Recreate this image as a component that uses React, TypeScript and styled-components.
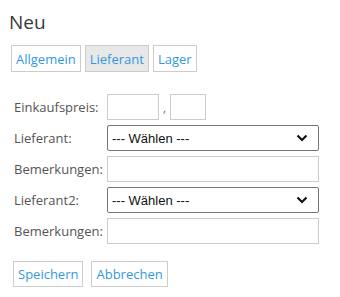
import styled, { createGlobalStyle } from "styled-components";

const GlobalStyle = createGlobalStyle`
  body {
    margin: 0;
    background: #fff;
    font-family: "Open Sans", "DejaVu Sans", sans-serif;
  }
`;

const Page = styled.div`
  padding: 10px 0 0 9px;
`;

const Title = styled.h1`
  margin: 0;
  font-size: 19px;
  line-height: 24px;
  font-weight: 400;
  color: #3a3a3a;
`;

const Tabs = styled.div`
  display: flex;
  gap: 4px;
  margin: 11px 0 0 2px;
`;

const Tab = styled.button<{ $active?: boolean; $height?: string }>`
  height: ${(props) => props.$height || "27px"};
  padding: 0 4px;
  border: 1px solid #cccccc;
  background: ${(props) => (props.$active ? "#e8e8e8" : "#fff")};
  color: #3399dd;
  font-family: "Open Sans", sans-serif;
  font-size: 13px;
  cursor: pointer;
`;

const Form = styled.div`
  display: grid;
  grid-template-columns: 93px 212px;
  grid-auto-rows: 26px;
  row-gap: 5px;
  margin: 22px 0 0 5px;
  align-items: center;
`;

const Label = styled.label`
  font-size: 13px;
  color: #555;
`;

const PriceRow = styled.div`
  display: flex;
  align-items: center;
`;

const Input = styled.input<{ $width?: string }>`
  box-sizing: border-box;
  height: 26px;
  width: ${(props) => props.$width || "100%"};
  border: 1px solid #cccccc;
  padding: 0 4px;
  font-size: 13px;
  outline: none;
`;

const Comma = styled.span`
  width: 11px;
  text-align: center;
  font-size: 13px;
  color: #3399dd;
`;

const Select = styled.div`
  box-sizing: border-box;
  height: 26px;
  width: 100%;
  border: 1px solid #767676;
  border-radius: 2px;
  display: flex;
  align-items: center;
  justify-content: space-between;
  padding: 0 10px 0 4px;
  font-family: "Liberation Sans", Arial, sans-serif;
  font-size: 13px;
  color: #111;
`;

const Buttons = styled.div`
  display: flex;
  gap: 8px;
  margin: 17px 0 0 4px;
`;

const Chevron = () => (
  <svg width="12" height="8" viewBox="0 0 12 8">
    <path d="M1.5 1.5 L6 6 L10.5 1.5" fill="none" stroke="#111" strokeWidth="2.2" />
  </svg>
);

const Dropdown = () => (
  <Select>
    <span>--- Wählen ---</span>
    <Chevron />
  </Select>
);

export default function App() {
  return (
    <Page>
      <GlobalStyle />
      <Title>Neu</Title>
      <Tabs>
        <Tab>Allgemein</Tab>
        <Tab $active>Lieferant</Tab>
        <Tab>Lager</Tab>
      </Tabs>
      <Form>
        <Label>Einkaufspreis:</Label>
        <PriceRow>
          <Input $width="52px" />
          <Comma>,</Comma>
          <Input $width="36px" />
        </PriceRow>
        <Label>Lieferant:</Label>
        <Dropdown />
        <Label>Bemerkungen:</Label>
        <Input />
        <Label>Lieferant2:</Label>
        <Dropdown />
        <Label>Bemerkungen:</Label>
        <Input />
      </Form>
      <Buttons>
        <Tab $height="26px">Speichern</Tab>
        <Tab $height="26px">Abbrechen</Tab>
      </Buttons>
    </Page>
  );
}
